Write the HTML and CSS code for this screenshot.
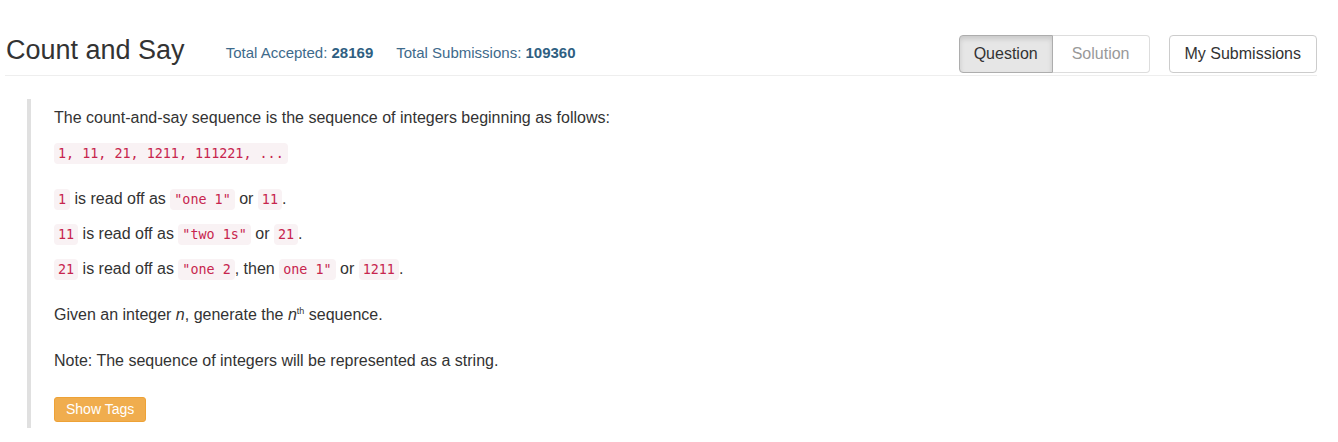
FILE: index.html
```html
<!DOCTYPE html>
<html>
<head>
<meta charset="utf-8">
<title>Count and Say</title>
<link rel="stylesheet" href="styles.css">
</head>
<body>
<div class="page">
  <div class="header">
    <h3 class="title">Count and Say</h3>
    <div class="stats">
      <span class="stat">Total Accepted: <b>28169</b></span>
      <span class="stat">Total Submissions: <b>109360</b></span>
    </div>
    <div class="actions">
      <div class="btn-group">
        <a class="btn btn-active">Question</a>
        <a class="btn btn-muted">Solution</a>
      </div>
      <a class="btn btn-single">My Submissions</a>
    </div>
  </div>
  <div class="question">
    <p class="line">The count-and-say sequence is the sequence of integers beginning as follows:</p>
    <p class="line"><code>1, 11, 21, 1211, 111221, ...</code></p>
    <p class="line sep"><code>1</code> is read off as <code>"one 1"</code> or <code>11</code>.</p>
    <p class="line"><code>11</code> is read off as <code>"two 1s"</code> or <code>21</code>.</p>
    <p class="line"><code>21</code> is read off as <code>"one 2</code>, then <code>one 1"</code> or <code>1211</code>.</p>
    <p class="line sep">Given an integer <i>n</i>, generate the <i>n</i><sup>th</sup> sequence.</p>
    <p class="line sep">Note: The sequence of integers will be represented as a string.</p>
    <div class="tags"><a class="btn-tags">Show Tags</a></div>
  </div>
</div>
</body>
</html>
```
FILE: styles.css
```css
* { box-sizing: border-box; }
html, body { margin: 0; padding: 0; background: #fff; }
body {
  font-family: "Liberation Sans", Arial, Helvetica, sans-serif;
  font-size: 16px;
  color: #333;
}
.page {
  margin: 0 21px 0 5px;
}
.header {
  display: flex;
  align-items: flex-start;
  padding-top: 35px;
  padding-bottom: 2px;
  border-bottom: 1px solid #eee;
}
.title {
  margin: 0 0 0 1px;
  font-size: 27px;
  font-weight: normal;
  line-height: 30px;
  color: #333;
}
.stats {
  margin: 8px 0 0 41px;
  display: flex;
  gap: 23px;
  font-size: 15px;
  line-height: 20px;
  color: #3e6a8b;
}
.stat b { color: #2f5f82; font-weight: bold; }
.actions {
  margin-left: auto;
  display: flex;
  gap: 19px;
}
.btn-group { display: flex; }
.btn {
  display: block;
  font-size: 16px;
  line-height: 20px;
  padding: 8px 15px;
  border: 1px solid #ccc;
  background: #fff;
  color: #333;
  border-radius: 4px;
  cursor: pointer;
}
.btn-active {
  background: #e6e6e6;
  border-color: #adadad;
  box-shadow: inset 0 3px 5px rgba(0,0,0,0.125);
  border-radius: 4px 0 0 4px;
  padding: 8px 14px 8px 14px;
}
.btn-muted {
  color: #999;
  border-color: #ddd;
  border-left: none;
  border-radius: 0 4px 4px 0;
  padding: 8px 19px 8px 19px;
}
.question {
  margin: 23px 0 0 22px;
  border-left: 4px solid #e0e0e0;
  padding: 6px 0 6px 23px;
}
.line {
  margin: 0 0 10px;
  line-height: 25px;
}
.sep { margin-top: 21px; }
code {
  display: inline-block;
  font-family: "DejaVu Sans Mono", "Liberation Mono", monospace;
  font-size: 13.4px;
  line-height: 17px;
  padding: 2px 4px;
  color: #c7254e;
  background: #f9f2f4;
  border-radius: 4px;
}
sup {
  font-size: 9px;
  line-height: 0;
  vertical-align: 6px;
}
.tags { margin-top: 24px; display: flex; }
.btn-tags {
  display: block;
  font-size: 14px;
  line-height: 19px;
  padding: 2px 11px;
  color: #fff;
  background: #f0ad4e;
  border: 1px solid #eea236;
  border-radius: 3px;
  cursor: pointer;
}
```
